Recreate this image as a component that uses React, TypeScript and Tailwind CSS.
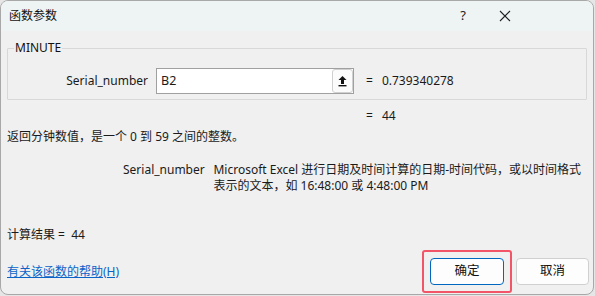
import React from "react";

const font = { fontFamily: '"Noto Sans", "Noto Sans CJK SC", sans-serif' };

function UploadIcon() {
  return (
    <svg width="11" height="12" viewBox="0 0 11 12">
      <path d="M5.5 1 L1.5 5 L4 5 L4 9 L7 9 L7 5 L9.5 5 Z" fill="#111" />
      <rect x="1.5" y="10" width="8" height="1.4" fill="#111" />
    </svg>
  );
}

export default function App() {
  return (
    <div className="w-[595px] h-[296px] bg-[#e6e6e6]">
      <div
        className="flex h-[295px] w-[594px] flex-col overflow-hidden rounded-lg border border-[#a8a8a8] bg-[#f0f0f0] text-[12px] text-[#1a1a1a]"
        style={font}
      >
        {/* title bar */}
        <div className="flex h-[30px] shrink-0 items-center bg-[#eef3f4] pl-[8px]">
          <span className="text-[12px] text-[#111]">函数参数</span>
          <span className="ml-auto mr-[33px] text-[13px] text-[#222]">?</span>
          <svg width="12" height="12" viewBox="0 0 12 12" className="mr-[82px]">
            <path d="M1 1 L11 11 M11 1 L1 11" stroke="#222" strokeWidth="1.1" />
          </svg>
        </div>

        <div className="flex flex-1 flex-col px-[6px]">
          {/* group box */}
          <fieldset className="mt-[10px] h-[59px] rounded-[1px] border border-[#d8d8d8] pl-[6px] pr-0">
            <legend className="px-[1px] text-[12px] leading-[14px] text-[#111]">MINUTE</legend>
            <div className="mt-[13px] flex items-center">
              <span className="w-[142px] pr-[8px] text-right">Serial_number</span>
              <div className="flex h-[26px] w-[198px] items-center border border-[#a0a0a0] bg-white">
                <span className="pl-[4px] text-[12.5px]">B2</span>
                <div className="ml-auto flex h-[24px] w-[21px] items-center justify-center rounded-[3px] border border-[#d0d0d0] bg-[#fbfbfb]">
                  <UploadIcon />
                </div>
              </div>
              <span className="ml-[12px]">=</span>
              <span className="ml-[9px]">0.739340278</span>
            </div>
          </fieldset>

          <div className="mt-[7px] flex">
            <span className="ml-[359px]">=</span>
            <span className="ml-[9px]">44</span>
          </div>

          <div className="mt-[3px]">返回分钟数值，是一个 0 到 59 之间的整数。</div>

          <div className="mt-[16px] flex leading-[16px]">
            <span className="ml-[116px] w-[91px]">Serial_number</span>
            <span className="w-[376px]">
              Microsoft Excel 进行日期及时间计算的日期-时间代码，或以时间格式
              <br />
              表示的文本，如 16:48:00 或 4:48:00 PM
            </span>
          </div>

          <div className="mt-[32px]">
            计算结果 =&nbsp;&nbsp;44
          </div>

          <div className="mt-[6px] flex items-center">
            <span className="text-[#0a64c8] underline">有关该函数的帮助(H)</span>
            <div className="ml-auto mr-[-2px] flex items-center gap-[4px]">
              <div className="rounded-[3px] border-2 border-[#f25468] p-[6px]">
                <button className="flex h-[27px] w-[74px] items-center justify-center rounded-[4px] border border-[#0067c0] bg-[#fdfdfd] text-[12.5px] text-[#111]">
                  确定
                </button>
              </div>
              <button className="flex h-[27px] w-[73px] items-center justify-center rounded-[4px] border border-[#d0d0d0] bg-[#fdfdfd] text-[12.5px] text-[#111]">
                取消
              </button>
            </div>
          </div>
        </div>
      </div>
    </div>
  );
}
